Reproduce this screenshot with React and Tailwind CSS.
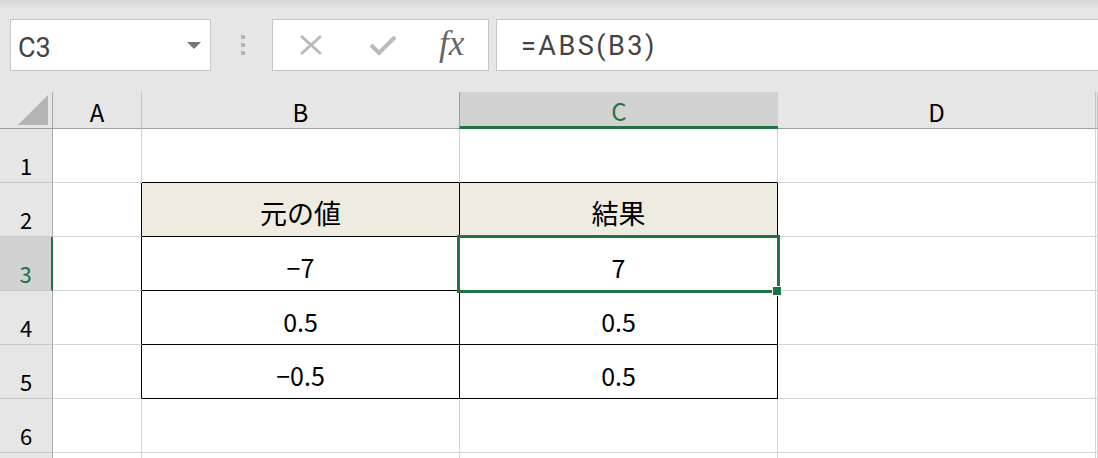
import React from "react";

const cellFont = { fontFamily: '"Noto Sans CJK JP", "Noto Sans", sans-serif' };

const cols = ["A", "B", "C", "D", ""];

// table contents: row -> [A, B, C, D, E]
const rows = [
  { n: 1, cells: ["", "", "", "", ""] },
  { n: 2, cells: ["", "元の値", "結果", "", ""] },
  { n: 3, cells: ["", "−7", "7", "", ""] },
  { n: 4, cells: ["", "0.5", "0.5", "", ""] },
  { n: 5, cells: ["", "−0.5", "0.5", "", ""] },
  { n: 6, cells: ["", "", "", "", ""] },
  { n: "", cells: ["", "", "", "", ""] },
];

function cellClass(r, c) {
  // c: 0=A 1=B 2=C 3=D 4=E
  let right = "border-r-[#d4d4d4]";
  let bottom = "border-b-[#d4d4d4]";
  let bg = "bg-white";
  let text = "text-[25px] pb-[10px]";
  const inTable = r >= 2 && r <= 5 && (c === 1 || c === 2);
  if (inTable) {
    right = "border-r-black";
    bottom = "border-b-black";
  }
  if (r >= 2 && r <= 5 && c === 0) right = "border-r-black";
  if (r === 1 && (c === 1 || c === 2)) bottom = "border-b-black";
  if (r === 2 && inTable) {
    bg = "bg-[#eeece1]";
    text = "text-[27px] pb-[10px]";
  }
  return `${right} ${bottom} ${bg} ${text}`;
}

function Toolbar() {
  return (
    <div className="h-[92px] bg-[#e6e6e6] flex flex-col">
      <div className="h-[8px] bg-gradient-to-b from-[#d6d6d6] to-[#e4e4e4]" />
      <div className="flex pl-[10px] pt-[11px]">
        <div className="w-[201px] h-[52px] bg-white border border-[#c6c6c6] flex items-center justify-between pl-[7px] pr-[9px]">
          <span
            className="text-[27px] leading-none text-[#444] pt-[6px]"
            style={{ fontFamily: "Roboto, sans-serif" }}
          >
            C3
          </span>
          <span className="w-0 h-0 border-l-[7px] border-r-[7px] border-t-[7px] border-l-transparent border-r-transparent border-t-[#777]" />
        </div>
        <div className="w-[61px] h-[52px] flex flex-col items-center justify-center gap-[4px] pl-[2px]">
          <span className="w-[4px] h-[4px] bg-[#b3b3b3]" />
          <span className="w-[4px] h-[4px] bg-[#b3b3b3]" />
          <span className="w-[4px] h-[4px] bg-[#b3b3b3]" />
        </div>
        <div className="w-[217px] h-[52px] bg-white border border-[#c6c6c6] flex items-center pl-[25px]">
          <svg width="26" height="22" viewBox="0 0 26 22">
            <path d="M3 2 L23 20 M23 2 L3 20" stroke="#bababa" strokeWidth="3" fill="none" />
          </svg>
          <svg className="ml-[45px]" width="28" height="22" viewBox="0 0 28 22">
            <path d="M2 11 L10 19 L26 3" stroke="#bababa" strokeWidth="4" fill="none" />
          </svg>
          <span
            className="ml-[42px] text-[35px] italic leading-none text-[#666] -mt-[4px]"
            style={{ fontFamily: '"Liberation Serif", serif' }}
          >
            fx
          </span>
        </div>
        <div className="ml-[7px] flex-1 h-[52px] bg-white border border-[#c6c6c6] border-r-0 flex items-center pl-[24px]">
          <span
            className="text-[27px] leading-none text-[#444] tracking-[2.5px] pt-[3px]"
            style={{ fontFamily: "Roboto, sans-serif" }}
          >
            =ABS(B3)
          </span>
        </div>
      </div>
    </div>
  );
}

export default function App() {
  return (
    <div className="w-[1098px] h-[458px] overflow-hidden bg-white">
      <Toolbar />
      <div className="grid grid-cols-[53px_89px_318px_318px_318px_1fr]" style={cellFont}>
        {/* header row */}
        <div className="h-[37px] bg-[#e6e6e6] border-r border-r-[#ababab] border-b border-b-[#9f9f9f] flex items-end justify-end pr-[3px] pb-[2px]">
          <svg width="32" height="32" viewBox="0 0 32 32">
            <polygon points="31,1 31,31 1,31" fill="#b4b4b4" />
          </svg>
        </div>
        {cols.map((c, i) =>
          c === "C" ? (
            <div
              key={i}
              className="h-[37px] bg-[#d2d2d2] border-b-[3px] border-b-[#217346] border-l border-l-[#9f9f9f] -ml-px flex items-center justify-center pt-[3px] text-[24px] leading-none text-[#217346]"
            >
              {c}
            </div>
          ) : (
            <div
              key={i}
              className="h-[37px] bg-[#e6e6e6] border-r border-r-[#c4c4c4] border-b border-b-[#9f9f9f] flex items-center justify-center pt-[3px] text-[24px] leading-none text-black"
            >
              {c}
            </div>
          )
        )}

        {rows.map((row, ri) => (
          <React.Fragment key={ri}>
            {row.n === 3 ? (
              <div className="h-[54px] bg-[#d2d2d2] border-r-2 border-r-[#217346] border-b border-b-[#c8c8c8] flex items-end justify-center pb-[6px] text-[22px] leading-none text-[#217346]">
                {row.n}
              </div>
            ) : (
              <div className="h-[54px] bg-[#e6e6e6] border-r border-r-[#ababab] border-b border-b-[#c8c8c8] flex items-end justify-center pb-[6px] text-[22px] leading-none text-black">
                {row.n}
              </div>
            )}
            {row.cells.map((v, c) => (
              <div
                key={c}
                className={`relative h-[54px] border-r border-b flex items-end justify-center leading-none text-black ${cellClass(row.n, c)}`}
              >
                {v}
                {row.n === 3 && c === 2 && (
                  <>
                    <div className="absolute z-10 -left-[3px] -top-[2px] w-[323px] h-[58px] border-[3px] border-[#217346] pointer-events-none" />
                    <div className="absolute z-20 left-[312px] top-[49px] w-[10px] h-[10px] bg-[#217346] border border-white" />
                  </>
                )}
              </div>
            ))}
          </React.Fragment>
        ))}
      </div>
    </div>
  );
}
